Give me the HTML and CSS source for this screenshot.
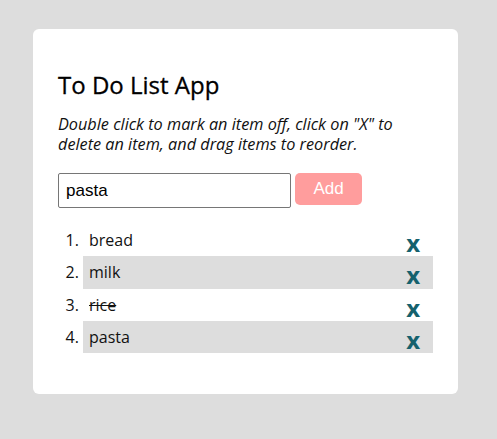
FILE: index.html
```html
<!DOCTYPE html>
<html>
<head>
<meta charset="utf-8">
<link rel="stylesheet" href="styles.css">
</head>
<body>
<div class="page">
  <div class="card">
    <h1 class="title">To Do List App</h1>
    <p class="hint">Double click to mark an item off, click on "X" to delete an item, and drag items to reorder.</p>
    <div class="form">
      <input class="field" type="text" value="pasta">
      <button class="add">Add</button>
    </div>
    <ol class="list">
      <li class="item"><div class="row"><span class="name">bread</span><span class="del">x</span></div></li>
      <li class="item alt"><div class="row"><span class="name">milk</span><span class="del">x</span></div></li>
      <li class="item"><div class="row"><span class="name done">rice</span><span class="del">x</span></div></li>
      <li class="item alt"><div class="row"><span class="name">pasta</span><span class="del">x</span></div></li>
    </ol>
  </div>
</div>
</body>
</html>
```

FILE: styles.css
```css
html, body {
  margin: 0;
  padding: 0;
  background: #dddddd;
  font-family: "Open Sans", sans-serif;
}
.page {
  padding: 29px 0 0 33px;
}
.card {
  width: 375px;
  background: #ffffff;
  border-radius: 6px;
  padding: 25px 25px 41px 25px;
}
.title {
  margin: 15px 0 0 0;
  font-size: 24px;
  font-weight: 400;
  line-height: 32px;
  color: #000;
  -webkit-text-stroke: 0.3px #000;
}
.hint {
  margin: 13px 0 0 0;
  font-size: 16.25px;
  font-style: italic;
  line-height: 20px;
  color: #111;
}
.form {
  display: flex;
  align-items: flex-start;
  gap: 4px;
  margin-top: 19px;
}
.field {
  box-sizing: border-box;
  width: 233px;
  height: 35px;
  margin: 0;
  border: 1px solid #767676;
  border-radius: 2px;
  padding: 0 7px;
  font-family: "Liberation Sans", Arial, sans-serif;
  font-size: 17px;
  color: #000;
}
.add {
  box-sizing: border-box;
  width: 67px;
  height: 32px;
  margin: 0;
  border: none;
  border-radius: 5px;
  background: #ff9d9d;
  color: #fff;
  font-family: "Liberation Sans", Arial, sans-serif;
  font-size: 17px;
}
.list {
  margin: 16px 0 0 0;
  padding: 0 0 0 25px;
  font-size: 16px;
  color: #111;
}
.item {
  height: 32.3px;
  padding: 0 13px 0 6px;
}
.row {
  display: flex;
  justify-content: space-between;
  align-items: center;
  height: 100%;
}
.alt {
  background: #dddddd;
}
.name {
  line-height: 22px;
}
.done {
  text-decoration: line-through;
}
.del {
  font-size: 24px;
  font-weight: 700;
  line-height: 24px;
  color: #15616d;
  margin-top: 6px;
}
```
